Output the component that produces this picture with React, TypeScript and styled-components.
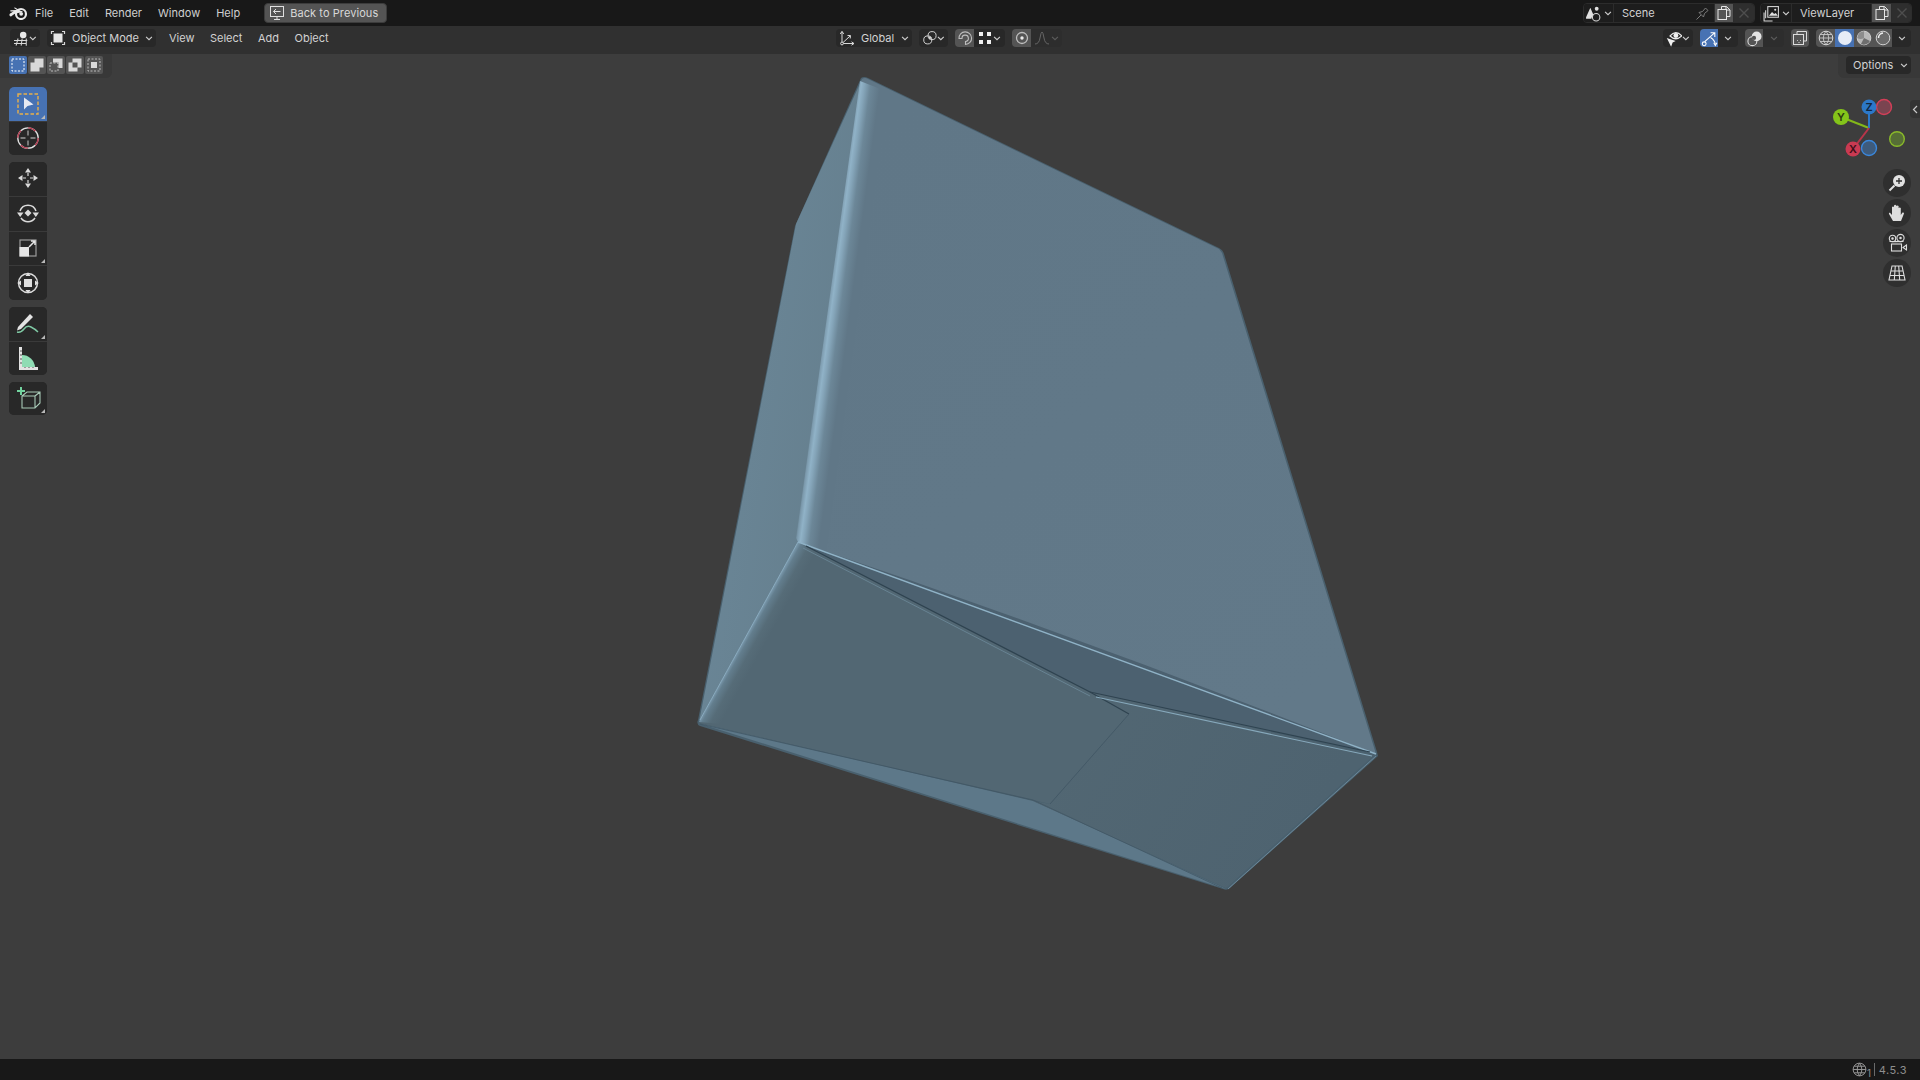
import React from "react";
import styled, { createGlobalStyle } from "styled-components";

const Global = createGlobalStyle`
  html, body { margin: 0; padding: 0; height: 100%; background: #3d3d3d; }
  #root { height: 100%; }
  * { box-sizing: border-box; }
`;

const Page = styled.div`
  width: 1920px;
  height: 1080px;
  display: flex;
  flex-direction: column;
  overflow: hidden;
  font-family: Inter, "Noto Sans", sans-serif;
  font-size: 11px;
  color: #d2d2d2;
`;

const TopBar = styled.div`
  height: 26px;
  flex: none;
  background: #181818;
  display: flex;
  align-items: flex-start;
  padding: 0 8px 0 9px;
`;

const LogoSlot = styled.div`
  width: 26px;
  height: 26px;
  display: flex;
  align-items: center;
`;

const MenuItem = styled.span`
  line-height: 26px;
  margin-right: 16px;
  color: #cfcfcf;
  white-space: nowrap;
`;

const BackButton = styled.div`
  margin: 3px 0 0 8px;
  width: 123px;
  height: 20px;
  display: flex;
  align-items: center;
  gap: 5px;
  padding-left: 4px;
  border-radius: 4px;
  background: #545454;
  border: 1px solid #3c3c3c;
  color: #d8d8d8;
  letter-spacing: 0.08px;
`;

const RightGroups = styled.div`
  margin-left: auto;
  display: flex;
  gap: 5px;
  padding-top: 3px;
`;

const Field = styled.div`
  height: 20px;
  display: flex;
  align-items: stretch;
  border-radius: 4px;
  overflow: hidden;
  border: 1px solid #2c2c2c;
`;

const FieldPart = styled.div<{ $w: number; $tone?: "dark" | "mid" | "dim" }>`
  width: ${(p) => p.$w}px;
  display: flex;
  align-items: center;
  justify-content: center;
  gap: 2px;
  background: ${(p) => (p.$tone === "mid" ? "#545454" : p.$tone === "dim" ? "#2e2e2e" : "#1d1d1d")};
  border-right: 1px solid #2c2c2c;
  &:last-child { border-right: 0; }
`;

const NameField = styled(FieldPart)`
  justify-content: space-between;
  padding: 0 3px 0 8px;
  background: #1d1d1d;
`;

const HeaderBar = styled.div`
  height: 28px;
  flex: none;
  background: #303030;
  display: grid;
  grid-template-columns: 836px 1fr auto;
  padding: 3px 9px 0 0;
`;

const HeaderLeft = styled.div`
  display: flex;
  align-items: flex-start;
  padding-left: 10px;
`;

const HeaderCenter = styled.div`
  display: flex;
  gap: 7px;
`;

const HeaderRight = styled.div`
  display: flex;
  gap: 7px;
`;

const Drop = styled.div<{ $w: number }>`
  width: ${(p) => p.$w}px;
  height: 18px;
  display: flex;
  align-items: center;
  justify-content: space-between;
  padding: 0 3px;
  border-radius: 4px;
  background: #282828;
`;

const ModeDrop = styled(Drop)`
  margin-left: 7px;
`;

const DropLabel = styled.span`
  flex: 1;
  padding-left: 6px;
  color: #d2d2d2;
`;

const HeadMenu = styled.span<{ $first?: boolean }>`
  line-height: 18px;
  margin-left: ${(p) => (p.$first ? 13 : 15.5)}px;
  color: #d2d2d2;
`;

const Seg = styled.div`
  height: 18px;
  display: flex;
  border-radius: 4px;
  overflow: hidden;
`;

const SegBtn = styled.div<{ $w: number; $tone?: "dark" | "mid" | "blue" | "dim" }>`
  width: ${(p) => p.$w}px;
  display: flex;
  align-items: center;
  justify-content: center;
  gap: 1px;
  background: ${(p) =>
    p.$tone === "blue" ? "#4772b3" : p.$tone === "mid" ? "#545454" : p.$tone === "dim" ? "#2d2d2d" : "#282828"};
`;

const Viewport = styled.div`
  flex: 1;
  position: relative;
  background: #3d3d3d;
  overflow: hidden;
`;

const MeshCanvas = styled.svg`
  position: absolute;
  inset: 0;
  width: 1920px;
  height: 1005px;
`;

const ToolStrip = styled.div`
  position: absolute;
  left: 0;
  top: 0;
  width: 112px;
  height: 24px;
  padding: 2px 0 0 9px;
  background: #383838;
  border-bottom-right-radius: 6px;
  display: flex;
  gap: 1px;
`;

const ModeBtn = styled.div<{ $on?: boolean }>`
  width: 18px;
  height: 18px;
  display: flex;
  align-items: center;
  justify-content: center;
  border-radius: 2px;
  background: ${(p) => (p.$on ? "#4772b3" : "#545454")};
`;

const OptionsStrip = styled.div`
  position: absolute;
  right: 0;
  top: 0;
  width: 82px;
  height: 24px;
  padding: 2px 9px 0 8px;
  background: #383838;
  border-bottom-left-radius: 6px;
`;

const OptionsBtn = styled.div`
  height: 18px;
  border-radius: 4px;
  background: #282828;
  display: flex;
  align-items: center;
  justify-content: space-between;
  padding: 0 3px 0 7px;
  color: #d2d2d2;
`;

const ToolColumn = styled.div`
  position: absolute;
  left: 9px;
  top: 33px;
  width: 38px;
  display: flex;
  flex-direction: column;
  gap: 7px;
`;

const ToolGroup = styled.div<{ $h: number }>`
  height: ${(p) => p.$h}px;
  display: flex;
  flex-direction: column;
  border-radius: 5px;
  overflow: hidden;
  background: #282828;
`;

const ToolBtn = styled.div<{ $on?: boolean; $corner?: boolean }>`
  flex: 1;
  position: relative;
  display: flex;
  align-items: center;
  justify-content: center;
  background: ${(p) => (p.$on ? "#4772b3" : "#282828")};
  & + & { border-top: 1px solid #3a3a3a; }
  ${(p) =>
    p.$corner
      ? `&::after {
    content: "";
    position: absolute;
    right: 2px;
    bottom: 2px;
    border-style: solid;
    border-width: 0 0 4px 4px;
    border-color: transparent transparent #b8b8b8 transparent;
  }`
      : ""}
`;

const GizmoCanvas = styled.svg`
  position: absolute;
  left: 1825px;
  top: 38px;
  width: 90px;
  height: 72px;
`;

const NavColumn = styled.div`
  position: absolute;
  left: 1883px;
  top: 115px;
  display: flex;
  flex-direction: column;
  gap: 2px;
`;

const NavBtn = styled.div`
  width: 28px;
  height: 28px;
  border-radius: 50%;
  background: #2f2f2f;
  display: flex;
  align-items: center;
  justify-content: center;
`;

const SideTab = styled.div`
  position: absolute;
  right: 0;
  top: 46px;
  width: 10px;
  height: 18px;
  background: #333;
  border-radius: 4px 0 0 4px;
  display: flex;
  align-items: center;
  justify-content: center;
`;

const StatusBar = styled.div`
  height: 21px;
  flex: none;
  background: #181818;
  display: flex;
  align-items: center;
  justify-content: flex-end;
  padding-right: 13px;
  color: #8e8e8e;
  font-size: 11px;
  letter-spacing: 0.5px;
`;

const StatusNum = styled.span`
  font-size: 10px;
  margin: 6px 2px 0 0;
`;

const StatusSep = styled.span`
  width: 1px;
  height: 13px;
  background: #6a6a6a;
  margin-right: 4px;
`;

const Chevron = ({ dim }: { dim?: boolean }) => (
  <svg width="8" height="5" viewBox="0 0 9 6" fill="none" stroke={dim ? "#5c5c5c" : "#cfcfcf"} strokeWidth="1.3">
    <path d="M1 1 L4.5 4.5 L8 1" />
  </svg>
);

const I = ({ s = 16, children }: { s?: number; children: React.ReactNode }) => (
  <svg width={s} height={s} viewBox="0 0 16 16" fill="none" stroke="#d8d8d8" strokeWidth="1">
    {children}
  </svg>
);

const BlenderLogo = () => (
  <svg width="19" height="13" viewBox="0 0 19 13" fill="#e8e8e8">
    <path d="M0.5 7.4 L5 4.4 L1.8 4.4 A0.6 0.6 0 0 1 1.8 3.2 L8 3 L5.3 1.2 A0.6 0.6 0 0 1 6 0.4 L12 4 L14 4.2 L12 5.6 Z" />
    <circle cx="12" cy="7" r="5" fill="none" stroke="#e8e8e8" strokeWidth="2.2" />
    <circle cx="12.2" cy="6.8" r="1.9" />
    <path d="M0.5 7 L6.6 3 L8 5 L2 9.4 Q0 9.6 0.5 7Z" />
  </svg>
);

const BackIcon = () => (
  <I>
    <rect x="1.5" y="1.5" width="13" height="10" stroke="#e0e0e0" />
    <path d="M5 14.5 H11 M8 11.5 V14.5 M11.5 6.5 H4.5 M7 4 L4.5 6.5 L7 9" stroke="#e0e0e0" />
  </I>
);

const ViewportIcon = () => (
  <I s={17}>
    <path d="M1 10 H14 M1 13 H13 M5 8 L3 15 M9 8 L8 15 M13 8 L13 15" />
    <circle cx="10" cy="4.5" r="3.2" fill="#e8e8e8" stroke="none" />
  </I>
);

const ObjectIcon = () => (
  <I>
    <rect x="3.5" y="3.5" width="9" height="9" fill="#e6e6e6" stroke="none" />
    <path d="M1.5 4 V1.5 H4 M12 1.5 H14.5 V4 M14.5 12 V14.5 H12 M4 14.5 H1.5 V12" strokeWidth="1.2" />
  </I>
);

const GlobalIcon = () => (
  <I>
    <path d="M3 2 V13.5 H15 M3 13.5 L11 6" />
    <path d="M1.3 4 L3 1.3 L4.7 4 M12.5 11.8 L15 13.5 L12.5 15.2 M8.5 5.5 L11.5 5.5 L11.2 8.5" />
    <circle cx="3" cy="13.5" r="1.4" fill="#303030" />
  </I>
);

const PivotIcon = () => (
  <I>
    <circle cx="6" cy="10" r="4.2" />
    <circle cx="10.5" cy="5.5" r="4.2" />
    <circle cx="8.2" cy="7.8" r="1" fill="#d8d8d8" />
  </I>
);

const MagnetIcon = () => (
  <I>
    <path d="M2 8.5 A6.3 6.3 0 1 1 8.5 14.5 L8.5 11.5 A3.2 3.2 0 1 0 5 8.5 Z" stroke="#bdbdbd" strokeWidth="1.1" />
  </I>
);

const GridDots = () => (
  <svg width="14" height="14" viewBox="0 0 14 14" fill="#f0f0f0">
    <rect x="1" y="1" width="4" height="4" />
    <rect x="9" y="1" width="4" height="4" />
    <rect x="1" y="9" width="4" height="4" />
    <rect x="9" y="9" width="4" height="4" />
  </svg>
);

const PropIcon = () => (
  <I>
    <circle cx="8" cy="8" r="5.5" stroke="#bdbdbd" strokeWidth="1.3" />
    <circle cx="8" cy="8" r="1.7" fill="#eaeaea" stroke="none" />
  </I>
);

const CurveIcon = () => (
  <I>
    <path d="M1 14 Q5 14 6 8 Q7 2 8 2 Q9 2 10 8 Q11 14 15 14" stroke="#666" />
  </I>
);

const SceneIcon = () => (
  <I s={17}>
    <path d="M1 11.5 L5 2.5 L8 9.5 A5 5 0 0 0 6 13 H1Z" fill="#e0e0e0" stroke="none" />
    <circle cx="11" cy="3.5" r="1.8" fill="#e0e0e0" stroke="none" />
    <circle cx="10.5" cy="11.5" r="3.5" />
  </I>
);

const PinIcon = () => (
  <I>
    <path d="M1.5 14.5 L6 10 M4 7.5 L8.5 12 L9.5 8.5 L13 5.5 L10.5 3 L7.5 6.5Z" stroke="#7c7c7c" />
  </I>
);

const CopyIcon = () => (
  <I>
    <path d="M5.5 4 V1.5 H10.5 L14 5 V11.5 H11 M10 1.5 V5 H14" stroke="#e6e6e6" />
    <rect x="2" y="4.5" width="8.5" height="10" stroke="#e6e6e6" />
  </I>
);

const CloseIcon = () => (
  <I>
    <path d="M3.5 3.5 L12.5 12.5 M12.5 3.5 L3.5 12.5" stroke="#4e4e4e" strokeWidth="1.4" />
  </I>
);

const LayerIcon = () => (
  <I s={17}>
    <path d="M2.5 5 V12.5 M1 7 V15 H9" />
    <rect x="4.5" y="1.5" width="10" height="10" fill="#1d1d1d" />
    <path d="M5.5 10 L8.5 6.5 L10.5 8.5 L12 7.5 L14 10Z" fill="#e0e0e0" stroke="none" />
    <circle cx="11.5" cy="4.5" r="1" fill="#e0e0e0" stroke="none" />
  </I>
);

const VisibleIcon = () => (
  <I s={17}>
    <path d="M4 5.5 Q9.5 -1 15.5 5.5 Q9.5 11 4 5.5Z" stroke="#ececec" strokeWidth="1.2" />
    <circle cx="9.7" cy="5" r="2.4" fill="#f0f0f0" stroke="none" />
    <path d="M0.8 7.5 L9.5 10.5 L6.5 12 L5 16Z" fill="#f0f0f0" stroke="none" />
  </I>
);

const GizmoIcon = () => (
  <I s={17}>
    <path d="M3.5 11 L12.5 3 M9 2.5 H13 V6.5" stroke="#fff" />
    <path d="M9 7 Q13 9.5 13.5 13.5" stroke="#fff" />
    <circle cx="3" cy="13" r="1.8" stroke="#fff" />
    <path d="M12 12 L13.5 14.5 L15 12" stroke="#fff" />
  </I>
);

const OverlayIcon = () => (
  <I s={17}>
    <circle cx="6" cy="10.5" r="4.2" stroke="#e0e0e0" />
    <circle cx="10" cy="6" r="4.6" fill="#e4e4e4" stroke="none" />
    <circle cx="7.5" cy="7.5" r="2" fill="#545454" stroke="none" />
  </I>
);

const XrayIcon = () => (
  <I>
    <path d="M5 4 V1.5 H14.5 V11 H12" stroke="#dcdcdc" />
    <rect x="1.5" y="4.5" width="10" height="10" stroke="#dcdcdc" />
    <path d="M5 10.5 H5.8 M8 10.5 H8.8 M6.5 12.5 H7.5" stroke="#dcdcdc" />
  </I>
);

const WireIcon = () => (
  <I>
    <circle cx="8" cy="8" r="6.8" stroke="#d6d6d6" />
    <path d="M1.2 8 H14.8 M8 1.2 Q2.5 8 8 14.8 Q13.5 8 8 1.2 M2.5 4.5 H13.5 M2.5 11.5 H13.5" stroke="#d6d6d6" strokeWidth="0.8" />
  </I>
);

const SolidIcon = () => (
  <I>
    <circle cx="8" cy="8" r="7" fill="#e6ecf7" stroke="none" />
  </I>
);

const MaterialIcon = () => (
  <I>
    <circle cx="8" cy="8" r="6.8" fill="#b9b9b9" stroke="#cfcfcf" />
    <path d="M8 1.2 A6.8 6.8 0 0 0 1.2 8 A7 7 0 0 0 8 8Z" fill="#8d8d8d" stroke="none" />
    <path d="M8 8 L14 11 A6.8 6.8 0 0 1 5 14Z" fill="#6e6e6e" stroke="none" />
  </I>
);

const RenderedIcon = () => (
  <I>
    <circle cx="8" cy="8" r="6.8" fill="#6b6b6b" stroke="#d0d0d0" />
    <path d="M3.5 8 A5 5 0 0 1 8 3" stroke="#efefef" strokeWidth="1.5" />
  </I>
);

const SelectTool = () => (
  <svg width="24" height="24" viewBox="0 0 24 24" fill="none">
    <rect x="2" y="2" width="20" height="20" stroke="#e8b04b" strokeWidth="1.4" strokeDasharray="3.5 2" />
    <path d="M8 5.5 L8 17.5 L11.5 14 L17.5 12.5Z" fill="#e6e9f2" />
  </svg>
);

const CursorTool = () => (
  <svg width="24" height="24" viewBox="0 0 24 24" fill="none">
    <circle cx="12" cy="12" r="10.2" stroke="#e0e0e0" strokeWidth="1.3" />
    <circle cx="12" cy="12" r="10.2" stroke="#b4384d" strokeWidth="1.3" strokeDasharray="8 8" />
    <path d="M12 4.5 V9.5 M12 14.5 V19.5 M4.5 12 H9.5 M14.5 12 H19.5" stroke="#9a9a9a" strokeWidth="1.4" />
  </svg>
);

const MoveTool = () => (
  <svg width="24" height="24" viewBox="0 1 24 24" fill="#dadada">
    <path d="M12 2 L15 6.5 H9Z M12 22 L15 17.5 H9Z M2 12 L6.5 9 V15Z M22 12 L17.5 9 V15Z" />
    <path d="M11.4 7 H12.6 V10 H11.4Z M11.4 14 H12.6 V17 H11.4Z M7 11.4 H10 V12.6 H7Z M14 11.4 H17 V12.6 H14Z" />
  </svg>
);

const RotateTool = () => (
  <svg width="24" height="24" viewBox="0 1 24 24" fill="none">
    <path d="M4 10 A8.5 8.5 0 0 1 20 10 M5 17 A8.5 8.5 0 0 0 19 17" stroke="#dadada" strokeWidth="1.5" />
    <path d="M1 11.5 L7.5 11.5 L4.2 16Z M23 11.5 L16.5 11.5 L19.8 16Z" fill="#dadada" />
    <path d="M12 8.5 L15.5 12 L12 15.5 L8.5 12Z" fill="#dadada" />
  </svg>
);

const ScaleTool = () => (
  <svg width="24" height="24" viewBox="0 0 24 24" fill="none">
    <rect x="4" y="4" width="16" height="16" stroke="#9c9c9c" strokeWidth="1.2" />
    <rect x="3.5" y="11" width="9.5" height="9.5" fill="#e6e6e6" />
    <path d="M13 11 L19 5 M15 5 H19 V9" stroke="#e6e6e6" strokeWidth="1.5" />
  </svg>
);

const TransformTool = () => (
  <svg width="24" height="24" viewBox="0 0 24 24" fill="none">
    <circle cx="12" cy="12" r="9.5" stroke="#dadada" strokeWidth="1.5" />
    <rect x="8" y="8" width="8" height="8" fill="#dfdfdf" />
    <path d="M12 1.5 L14.5 5 H9.5Z M12 22.5 L14.5 19 H9.5Z M1.5 12 L5 9.5 V14.5Z M22.5 12 L19 9.5 V14.5Z" fill="#dfdfdf" />
  </svg>
);

const AnnotateTool = () => (
  <svg width="28" height="24" viewBox="0 1 28 24" fill="none">
    <path d="M4 16 L16 3 L19 6 L7 18 L3 19.5Z" fill="#e4e4e4" />
    <path d="M3 21 Q7 22 10 18 Q13 14 17 16 Q21 18 24 21" stroke="#7fc9a4" strokeWidth="1.4" />
  </svg>
);

const MeasureTool = () => (
  <svg width="24" height="26" viewBox="0 0 24 26" fill="none">
    <path d="M6 10 A13 13 0 0 1 19 22 H6Z" fill="#8fdcb4" />
    <path d="M3 2 H6 V22 H22 V25 H3Z" fill="#e2e2e2" />
    <path d="M4 6 H6 M4 10 H6 M4 14 H6 M4 18 H6 M9 22 V23 M13 22 V23 M17 22 V23" stroke="#555" />
  </svg>
);

const AddCubeTool = () => (
  <svg width="28" height="26" viewBox="0 2 28 26" fill="none">
    <path d="M3 7 H11 M7 3 V11" stroke="#72d39f" strokeWidth="2" />
    <path d="M8 12 L13 8 H26 V19 L21 24 H8Z M8 12 H21 V24 M21 12 L26 8" stroke="#a7c9b6" strokeWidth="1.1" />
  </svg>
);

const ModeIcon = ({ kind }: { kind: number }) => (
  <svg width="14" height="14" viewBox="0 0 14 14" fill="none">
    {kind === 0 && <rect x="1" y="1" width="12" height="12" stroke="#fff" strokeDasharray="2 1.5" />}
    {kind === 1 && <path d="M0.5 4.5 H4.5 V0.5 H13.5 V9.5 H9.5 V13.5 H0.5Z" fill="#d8d8d8" />}
    {kind === 2 && (
      <>
        <rect x="1" y="5" width="8" height="8" stroke="#bbb" strokeDasharray="2 1.5" />
        <path d="M4 0.5 H13.5 V10 H9.5 V4.5 H4Z" fill="#d8d8d8" />
      </>
    )}
    {kind === 3 && (
      <>
        <path d="M0.5 4.5 H4.5 V0.5 H13.5 V9.5 H9.5 V13.5 H0.5Z" fill="#d8d8d8" />
        <rect x="4.5" y="4.5" width="5" height="5" fill="#545454" />
      </>
    )}
    {kind === 4 && (
      <>
        <rect x="1" y="1" width="12" height="12" stroke="#bbb" strokeDasharray="2 1.5" />
        <rect x="4" y="4" width="6" height="6" fill="#d8d8d8" />
      </>
    )}
  </svg>
);

const ZoomNav = () => (
  <svg width="20" height="20" viewBox="0 0 20 20" fill="none">
    <circle cx="12" cy="8" r="6" fill="#e2e2e2" />
    <path d="M12 5 V11 M9 8 H15" stroke="#2f2f2f" strokeWidth="1.3" />
    <path d="M7.5 12.5 L2.5 17.5" stroke="#e2e2e2" strokeWidth="2" />
  </svg>
);

const HandNav = () => (
  <svg width="20" height="20" viewBox="0 0 20 20" fill="#dedede">
    <path d="M6 18 L2 11 Q1.5 9.5 3 9.8 L5 12 V4 Q6 2.8 7 4 V9 V2.5 Q8.2 1.2 9.3 2.5 V9 V3 Q10.5 1.8 11.6 3 V9.5 V5 Q12.8 3.8 13.8 5 V12 L15.5 9.5 Q17 9 17 10.5 L14 18Z" />
  </svg>
);

const CameraNav = () => (
  <svg width="22" height="22" viewBox="0 0 22 22" fill="none" stroke="#dedede" strokeWidth="1.1">
    <circle cx="6.5" cy="6.5" r="3.2" />
    <circle cx="14.5" cy="6" r="3.6" />
    <circle cx="6.5" cy="6.5" r="0.7" fill="#dedede" />
    <circle cx="14.5" cy="6" r="0.7" fill="#dedede" />
    <path d="M3.5 9.5 L9 9.6 L17.5 9.5" />
    <rect x="5.5" y="12" width="10" height="7" />
    <path d="M20.5 13 L17 15.5 L20.5 18Z" />
  </svg>
);

const GridNav = () => (
  <svg width="20" height="20" viewBox="0 0 20 20" fill="none" stroke="#dedede" strokeWidth="1.1">
    <path d="M5 3 H15 L18 17 H2Z M3.6 8 H16.4 M2.7 12.5 H17.3 M8.3 3 L7.3 17 M11.7 3 L12.7 17" />
  </svg>
);

const GlobeIcon = () => (
  <svg width="15" height="15" viewBox="0 0 16 16" fill="none" stroke="#9a9a9a" strokeWidth="1">
    <circle cx="8" cy="8" r="6.8" />
    <path d="M1.2 8 H14.8 M8 1.2 Q3 8 8 14.8 Q13 8 8 1.2 M2.4 4.5 H13.6 M2.4 11.5 H13.6" />
  </svg>
);

const BlockMesh = () => (
  <MeshCanvas viewBox="0 54 1920 1005">
    <defs>
      <linearGradient id="crease" gradientUnits="userSpaceOnUse" x1="826" y1="309" x2="850" y2="312.2">
        <stop offset="0" stopColor="#6b8696" />
        <stop offset="0.08" stopColor="#7d9bae" />
        <stop offset="0.22" stopColor="#90b2c7" />
        <stop offset="0.36" stopColor="#84a4b8" />
        <stop offset="0.6" stopColor="#6c8798" />
        <stop offset="1" stopColor="#607787" />
      </linearGradient>
      <linearGradient id="leftFace" gradientUnits="userSpaceOnUse" x1="700" y1="400" x2="830" y2="420">
        <stop offset="0" stopColor="#6b8798" />
        <stop offset="1" stopColor="#66808f" />
      </linearGradient>
      <linearGradient id="mainFace" gradientUnits="userSpaceOnUse" x1="850" y1="150" x2="1300" y2="700">
        <stop offset="0" stopColor="#607787" />
        <stop offset="1" stopColor="#627989" />
      </linearGradient>
      <linearGradient id="flapEdge" gradientUnits="userSpaceOnUse" x1="748" y1="632" x2="766" y2="642">
        <stop offset="0" stopColor="#7d9cb0" />
        <stop offset="0.18" stopColor="#637e8e" />
        <stop offset="0.55" stopColor="#566c78" />
        <stop offset="1" stopColor="#526773" />
      </linearGradient>
      <linearGradient id="flapRight" gradientUnits="userSpaceOnUse" x1="1050" y1="720" x2="1290" y2="860">
        <stop offset="0" stopColor="#526773" />
        <stop offset="1" stopColor="#4e6370" />
      </linearGradient>
    </defs>

    {/* outer silhouette, slightly wider than faces for the dark rim */}
    <path
      d="M861 78 Q864 76 868 78 L1219 248 Q1223 250 1224 254 L1377 752 L1378 756 L1230 888 Q1227 891 1223 889 L700 726 Q696 724 698 720 L795 226 Z"
      fill="#49606e"
    />
    {/* left face */}
    <path d="M862 79 L796 224 L699 722 L798 542 Z" fill="url(#leftFace)" />
    {/* main face */}
    <path d="M862 79 Q865 77 868 79 L1219 249 L1222 253 L1376 754 L798 542 Z" fill="url(#mainFace)" />
    {/* bevel along the vertical corner */}
    <path d="M860 81 L888 92 L826 556 L798 542 L796 538 Z" fill="url(#crease)" />
    {/* bottom strip */}
    <path d="M698 723 L1033 801 L1226 889 Z" fill="#5d7889" />
    {/* gap wedge under the front edge */}
    <path d="M798 542 Q1090 640 1376 754 L1090 692 Z" fill="#4c6170" />
    {/* right lower flap */}
    <path d="M1090 692 L1374 755 L1226 888 L1033 801 L1050 804 L1129 714 Z" fill="url(#flapRight)" />
    {/* left lower flap */}
    <path d="M798 542 L1090 692 L1129 714 L1050 804 L1033 800 L699 723 Z" fill="#526773" />
    <path d="M798 542 L820 555 L722 724 L699 722 Z" fill="url(#flapEdge)" />
    {/* crease lines */}
    <path d="M798 542 L1376 754" stroke="#8fb2c6" strokeWidth="1.4" fill="none" />
    <path d="M806 546 L1090 692 L1129 714" stroke="#2f4350" strokeWidth="1.2" fill="none" />
    <path d="M803 548 L1090 696" stroke="#6d8a9b" strokeWidth="0.8" fill="none" />
    <path d="M1090 692 L1370 752" stroke="#2f4350" strokeWidth="1.2" fill="none" />
    <path d="M1096 697 L1372 756" stroke="#86a8bb" strokeWidth="1.1" fill="none" />
    <path d="M1129 714 L1050 804" stroke="#415764" strokeWidth="0.8" fill="none" />
    <path d="M700 724 L1033 800 L1222 888" stroke="#415764" strokeWidth="0.8" fill="none" />
    <path d="M798 542 L700 720" stroke="#8aabbf" strokeWidth="1" fill="none" />
    <path d="M1376 756 L1228 889" stroke="#6b8798" strokeWidth="1" fill="none" />
  </MeshCanvas>
);

const Gizmo = () => (
  <GizmoCanvas viewBox="1825 92 90 72">
    <path d="M1869 128 L1841 117" stroke="#84b81a" strokeWidth="2" />
    <path d="M1869 128 L1869 107" stroke="#2c78c8" strokeWidth="2" />
    <path d="M1869 128 L1853 149" stroke="#b8354a" strokeWidth="2" />
    <circle cx="1884" cy="107" r="7.5" fill="#7a4450" stroke="#d33f58" strokeWidth="1.4" />
    <circle cx="1869" cy="148" r="7.5" fill="#3e5b7c" stroke="#3a87dc" strokeWidth="1.4" />
    <circle cx="1897" cy="139" r="7.3" fill="#566e36" stroke="#8aba2a" strokeWidth="1.4" />
    <circle cx="1841" cy="117" r="8" fill="#84c41a" />
    <circle cx="1869" cy="107" r="7.5" fill="#2c78c8" />
    <circle cx="1853" cy="149" r="7.5" fill="#c93a52" />
    <text x="1841" y="121" fontSize="11" fontWeight="600" textAnchor="middle" fill="#2b3a10" fontFamily="Inter, sans-serif">Y</text>
    <text x="1869" y="111" fontSize="11" fontWeight="600" textAnchor="middle" fill="#10263f" fontFamily="Inter, sans-serif">Z</text>
    <text x="1853" y="153" fontSize="11" fontWeight="600" textAnchor="middle" fill="#3c0f18" fontFamily="Inter, sans-serif">X</text>
  </GizmoCanvas>
);

export default function App() {
  return (
    <Page>
      <Global />
      <TopBar>
        <LogoSlot>
          <BlenderLogo />
        </LogoSlot>
        <MenuItem>File</MenuItem>
        <MenuItem>Edit</MenuItem>
        <MenuItem>Render</MenuItem>
        <MenuItem>Window</MenuItem>
        <MenuItem>Help</MenuItem>
        <BackButton>
          <BackIcon />
          Back to Previous
        </BackButton>
        <RightGroups>
          <Field>
            <FieldPart $w={30}>
              <SceneIcon />
              <Chevron />
            </FieldPart>
            <NameField $w={101}>
              Scene
              <PinIcon />
            </NameField>
            <FieldPart $w={19} $tone="mid">
              <CopyIcon />
            </FieldPart>
            <FieldPart $w={20} $tone="dim">
              <CloseIcon />
            </FieldPart>
          </Field>
          <Field>
            <FieldPart $w={31}>
              <LayerIcon />
              <Chevron />
            </FieldPart>
            <NameField $w={80}>ViewLayer</NameField>
            <FieldPart $w={20} $tone="mid">
              <CopyIcon />
            </FieldPart>
            <FieldPart $w={19} $tone="dim">
              <CloseIcon />
            </FieldPart>
          </Field>
        </RightGroups>
      </TopBar>

      <HeaderBar>
        <HeaderLeft>
          <Drop $w={30}>
            <ViewportIcon />
            <Chevron />
          </Drop>
          <ModeDrop $w={109}>
            <ObjectIcon />
            <DropLabel>Object Mode</DropLabel>
            <Chevron />
          </ModeDrop>
          <HeadMenu $first>View</HeadMenu>
          <HeadMenu>Select</HeadMenu>
          <HeadMenu>Add</HeadMenu>
          <HeadMenu>Object</HeadMenu>
        </HeaderLeft>
        <HeaderCenter>
          <Drop $w={76}>
            <GlobalIcon />
            <DropLabel>Global</DropLabel>
            <Chevron />
          </Drop>
          <Drop $w={29}>
            <PivotIcon />
            <Chevron />
          </Drop>
          <Seg>
            <SegBtn $w={19} $tone="mid">
              <MagnetIcon />
            </SegBtn>
            <SegBtn $w={31}>
              <GridDots />
              <Chevron />
            </SegBtn>
          </Seg>
          <Seg>
            <SegBtn $w={19} $tone="mid">
              <PropIcon />
            </SegBtn>
            <SegBtn $w={31} $tone="dim">
              <CurveIcon />
              <Chevron dim />
            </SegBtn>
          </Seg>
        </HeaderCenter>
        <HeaderRight>
          <Drop $w={30}>
            <VisibleIcon />
            <Chevron />
          </Drop>
          <Seg>
            <SegBtn $w={18} $tone="blue">
              <GizmoIcon />
            </SegBtn>
            <SegBtn $w={20}>
              <Chevron />
            </SegBtn>
          </Seg>
          <Seg>
            <SegBtn $w={18} $tone="mid">
              <OverlayIcon />
            </SegBtn>
            <SegBtn $w={21} $tone="dim">
              <Chevron dim />
            </SegBtn>
          </Seg>
          <Seg>
            <SegBtn $w={18} $tone="mid">
              <XrayIcon />
            </SegBtn>
          </Seg>
          <Seg>
            <SegBtn $w={19} $tone="mid">
              <WireIcon />
            </SegBtn>
            <SegBtn $w={19} $tone="blue">
              <SolidIcon />
            </SegBtn>
            <SegBtn $w={19} $tone="mid">
              <MaterialIcon />
            </SegBtn>
            <SegBtn $w={19} $tone="mid">
              <RenderedIcon />
            </SegBtn>
            <SegBtn $w={19}>
              <Chevron />
            </SegBtn>
          </Seg>
        </HeaderRight>
      </HeaderBar>

      <Viewport>
        <BlockMesh />
        <ToolStrip>
          {[0, 1, 2, 3, 4].map((k) => (
            <ModeBtn key={k} $on={k === 0}>
              <ModeIcon kind={k} />
            </ModeBtn>
          ))}
        </ToolStrip>
        <OptionsStrip>
          <OptionsBtn>
            Options
            <Chevron />
          </OptionsBtn>
        </OptionsStrip>
        <ToolColumn>
          <ToolGroup $h={68}>
            <ToolBtn $on $corner>
              <SelectTool />
            </ToolBtn>
            <ToolBtn>
              <CursorTool />
            </ToolBtn>
          </ToolGroup>
          <ToolGroup $h={138}>
            <ToolBtn>
              <MoveTool />
            </ToolBtn>
            <ToolBtn>
              <RotateTool />
            </ToolBtn>
            <ToolBtn $corner>
              <ScaleTool />
            </ToolBtn>
            <ToolBtn>
              <TransformTool />
            </ToolBtn>
          </ToolGroup>
          <ToolGroup $h={68}>
            <ToolBtn $corner>
              <AnnotateTool />
            </ToolBtn>
            <ToolBtn>
              <MeasureTool />
            </ToolBtn>
          </ToolGroup>
          <ToolGroup $h={33}>
            <ToolBtn $corner>
              <AddCubeTool />
            </ToolBtn>
          </ToolGroup>
        </ToolColumn>
        <Gizmo />
        <SideTab>
          <svg width="6" height="9" viewBox="0 0 6 9" fill="none" stroke="#c8c8c8" strokeWidth="1.2">
            <path d="M5 1 L1.5 4.5 L5 8" />
          </svg>
        </SideTab>
        <NavColumn>
          <NavBtn>
            <ZoomNav />
          </NavBtn>
          <NavBtn>
            <HandNav />
          </NavBtn>
          <NavBtn>
            <CameraNav />
          </NavBtn>
          <NavBtn>
            <GridNav />
          </NavBtn>
        </NavColumn>
      </Viewport>

      <StatusBar>
        <GlobeIcon />
        <StatusNum>1</StatusNum>
        <StatusSep />
        4.5.3
      </StatusBar>
    </Page>
  );
}
